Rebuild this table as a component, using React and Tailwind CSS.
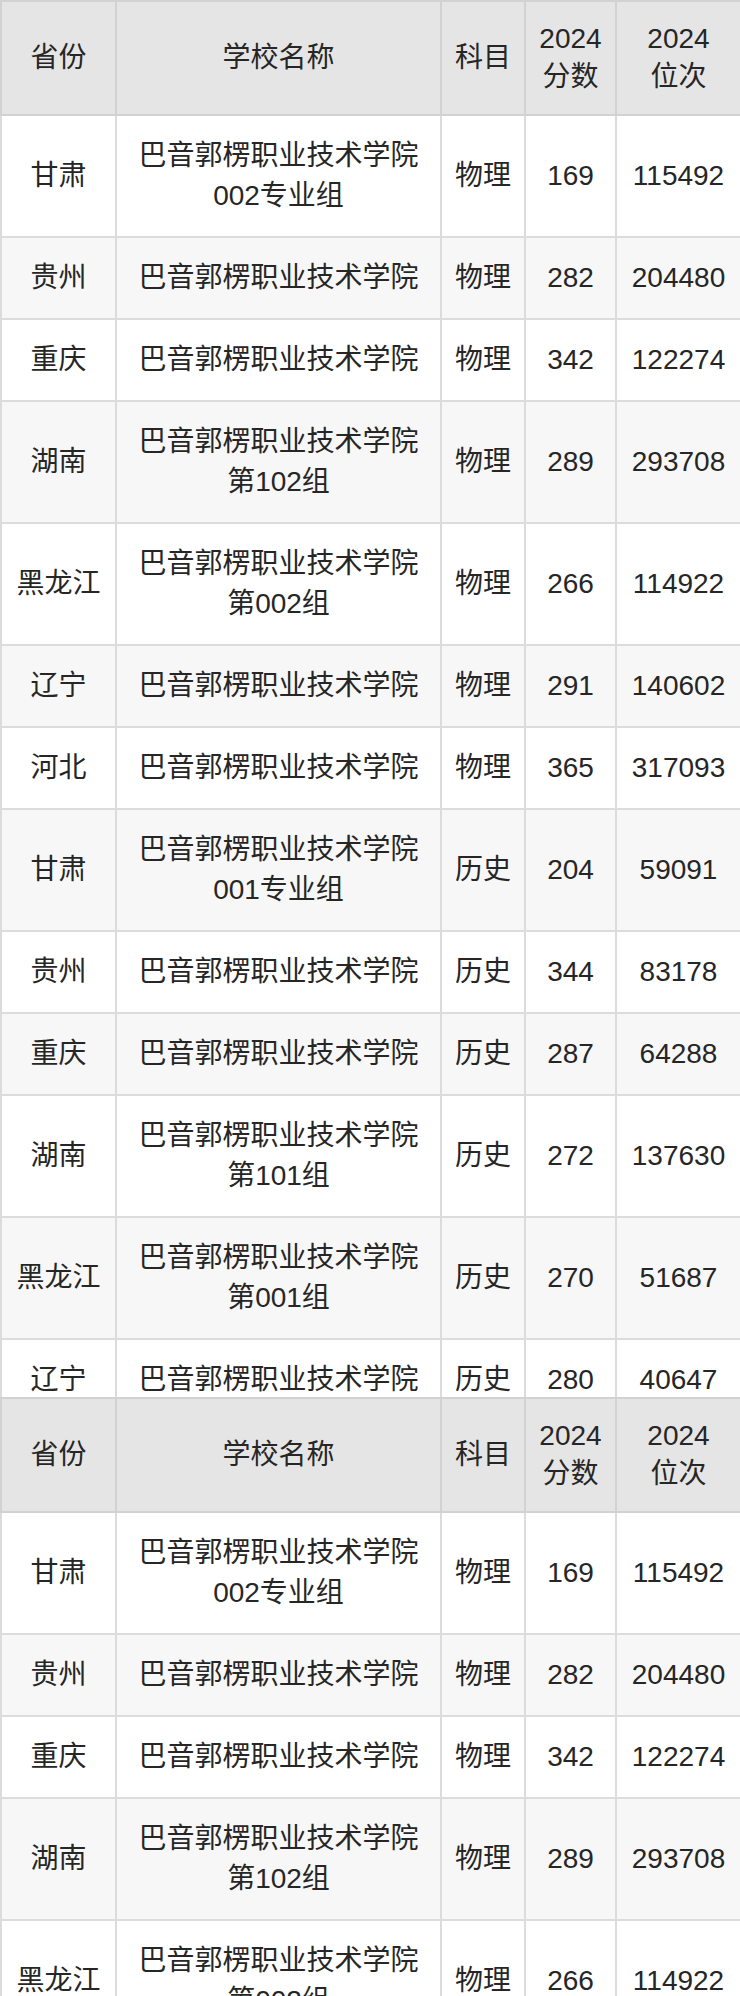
import React from 'react'

const rows = [
  ['甘肃', ['巴音郭楞职业技术学院', '002专业组'], '物理', '169', '115492'],
  ['贵州', ['巴音郭楞职业技术学院'], '物理', '282', '204480'],
  ['重庆', ['巴音郭楞职业技术学院'], '物理', '342', '122274'],
  ['湖南', ['巴音郭楞职业技术学院', '第102组'], '物理', '289', '293708'],
  ['黑龙江', ['巴音郭楞职业技术学院', '第002组'], '物理', '266', '114922'],
  ['辽宁', ['巴音郭楞职业技术学院'], '物理', '291', '140602'],
  ['河北', ['巴音郭楞职业技术学院'], '物理', '365', '317093'],
  ['甘肃', ['巴音郭楞职业技术学院', '001专业组'], '历史', '204', '59091'],
  ['贵州', ['巴音郭楞职业技术学院'], '历史', '344', '83178'],
  ['重庆', ['巴音郭楞职业技术学院'], '历史', '287', '64288'],
  ['湖南', ['巴音郭楞职业技术学院', '第101组'], '历史', '272', '137630'],
  ['黑龙江', ['巴音郭楞职业技术学院', '第001组'], '历史', '270', '51687'],
  ['辽宁', ['巴音郭楞职业技术学院'], '历史', '280', '40647'],
]

function Table({ data }) {
  const th = 'border-2 border-[#d2d2d2] px-0 py-[18px] leading-[38px] font-normal text-center align-middle'
  const td = 'border-2 border-[#dcdcdc] px-0 py-[20px] leading-[40px] text-center align-middle'
  return (
    <table className="w-full table-fixed border-collapse text-[28px] text-[#262626]">
      <colgroup>
        <col className="w-[115px]" />
        <col className="w-[325px]" />
        <col className="w-[84px]" />
        <col className="w-[91px]" />
        <col className="w-[125px]" />
      </colgroup>
      <thead>
        <tr className="bg-[#e5e5e5]">
          <th className={th}>省份</th>
          <th className={th}>学校名称</th>
          <th className={th}>科目</th>
          <th className={th}>2024<br />分数</th>
          <th className={th}>2024<br />位次</th>
        </tr>
      </thead>
      <tbody>
        {data.map((r, i) => (
          <tr key={i} className={i % 2 === 1 ? 'bg-[#f7f7f7]' : 'bg-white'}>
            <td className={td}>{r[0]}</td>
            <td className={td}>
              {r[1].map((line, j) => (
                <div key={j}>{line}</div>
              ))}
            </td>
            <td className={td}>{r[2]}</td>
            <td className={td}>{r[3]}</td>
            <td className={td}>{r[4]}</td>
          </tr>
        ))}
      </tbody>
    </table>
  )
}

export default function App() {
  return (
    <div
      className="w-[740px] bg-white"
      style={{ fontFamily: '"Liberation Sans", "Noto Sans CJK SC", sans-serif' }}
    >
      {/* 第一张表：容器固定高度，末行被截断 */}
      <div className="h-[1397px] overflow-hidden">
        <Table data={rows} />
      </div>
      {/* 第二张表：重复内容，被页面底部截断 */}
      <div className="h-[599px] overflow-hidden">
        <Table data={rows.slice(0, 7)} />
      </div>
    </div>
  )
}
